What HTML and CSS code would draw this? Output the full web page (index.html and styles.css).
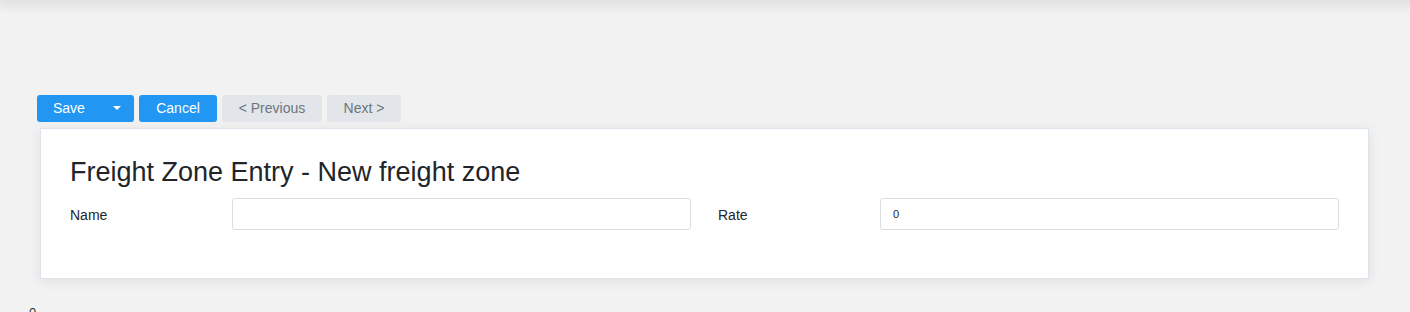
FILE: index.html
```html
<!DOCTYPE html>
<html>
<head>
<meta charset="utf-8">
<link rel="stylesheet" href="styles.css">
</head>
<body>
<div class="topbar"></div>
<main class="page">
  <div class="toolbar">
    <div class="btn btn-primary split">
      <span class="split-label">Save</span>
      <span class="caret"></span>
    </div>
    <button class="btn btn-primary cancel">Cancel</button>
    <button class="btn btn-light prev">&lt; Previous</button>
    <button class="btn btn-light next">Next &gt;</button>
  </div>
  <section class="card">
    <h1 class="title">Freight Zone Entry - New freight zone</h1>
    <div class="form-grid">
      <div class="field">
        <label class="label">Name</label>
        <input class="input" type="text" value="">
      </div>
      <div class="field">
        <label class="label">Rate</label>
        <input class="input" type="text" value="0">
      </div>
    </div>
  </section>
  <div class="footer">0</div>
</main>
</body>
</html>
```
FILE: styles.css
```css
html, body {
  margin: 0;
  padding: 0;
  background: #f2f2f2;
  font-family: "Liberation Sans", Arial, sans-serif;
  color: #212529;
  overflow: hidden;
  height: 312px;
}
.topbar {
  height: 0;
  box-shadow: 0 0 12px 4px rgba(0, 0, 0, 0.12);
}
.page {
  padding: 95px 41px 0 37px;
}
.toolbar {
  display: flex;
  gap: 5px;
  height: 27px;
  margin-bottom: 6px;
}
.btn {
  box-sizing: border-box;
  height: 27px;
  border: none;
  border-radius: 3px;
  font-family: "Liberation Sans", Arial, sans-serif;
  font-size: 14px;
  padding: 0 0 2px 0;
  display: flex;
  align-items: center;
  justify-content: center;
}
.btn-primary {
  background: #2196f3;
  color: #fff;
}
.btn-light {
  background: #e2e6ea;
  color: #6c757d;
}
.split {
  width: 97px;
  justify-content: flex-start;
}
.split-label {
  box-sizing: border-box;
  padding-left: 16px;
  width: 76px;
}
.caret {
  width: 0;
  height: 0;
  margin-top: 1px;
  border-left: 4px solid transparent;
  border-right: 4px solid transparent;
  border-top: 4px solid #fff;
}
.cancel { width: 78px; }
.prev { width: 100px; }
.next { width: 74px; }
.card {
  margin-left: 3px;
  background: #fff;
  border: 1px solid #dde3ea;
  box-shadow: 0 2px 12px rgba(0, 0, 0, 0.08);
  padding: 28px 29px 48px 29px;
}
.title {
  margin: 0 0 10px 0;
  font-size: 27px;
  font-weight: normal;
  line-height: 31px;
  color: #212529;
}
.form-grid {
  display: grid;
  grid-template-columns: 1fr 1fr;
  column-gap: 27px;
}
.field {
  display: grid;
  grid-template-columns: 162px 1fr;
  align-items: center;
}
.label {
  font-size: 14px;
  color: #212529;
  padding-top: 2px;
}
.input {
  box-sizing: border-box;
  height: 32px;
  width: 100%;
  border: 1px solid #dadde1;
  border-radius: 3px;
  padding: 0 12px;
  font-family: "Liberation Sans", Arial, sans-serif;
  font-size: 11px;
  color: #212529;
  background: #fff;
}
.footer {
  margin-top: 26px;
  margin-left: -8px;
  font-size: 13px;
  color: #333;
}
```
